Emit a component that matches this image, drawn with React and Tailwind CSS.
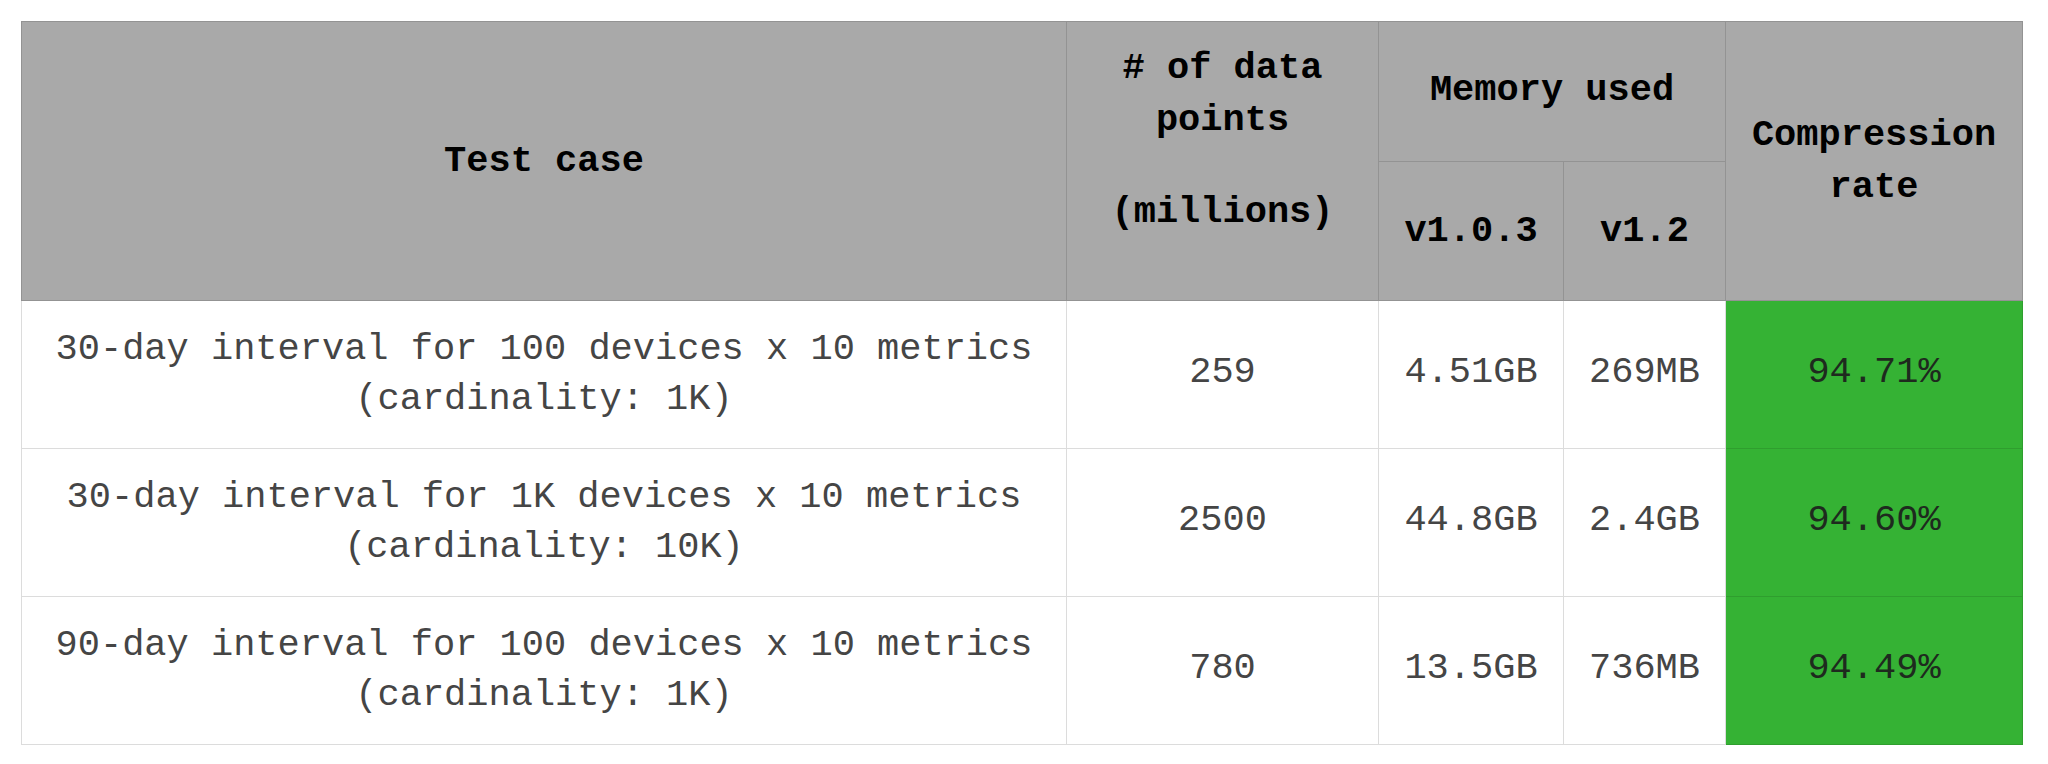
import React from 'react';

const rows = [
  {
    label: ['30-day interval for 100 devices x 10 metrics', '(cardinality: 1K)'],
    points: '259',
    v103: '4.51GB',
    v12: '269MB',
    rate: '94.71%',
  },
  {
    label: ['30-day interval for 1K devices x 10 metrics', '(cardinality: 10K)'],
    points: '2500',
    v103: '44.8GB',
    v12: '2.4GB',
    rate: '94.60%',
  },
  {
    label: ['90-day interval for 100 devices x 10 metrics', '(cardinality: 1K)'],
    points: '780',
    v103: '13.5GB',
    v12: '736MB',
    rate: '94.49%',
  },
];

export default function App() {
  return (
    <div className="w-[2048px] h-[764px] bg-white pt-[21px] pl-[21px] font-['Liberation_Mono','Courier_New',monospace]">
      <table className="table-fixed border-collapse w-[2001px] text-[37px] leading-[52px]">
        <colgroup>
          <col className="w-[1045px]" />
          <col className="w-[312px]" />
          <col className="w-[185px]" />
          <col className="w-[162px]" />
          <col className="w-[297px]" />
        </colgroup>
        <thead>
          <tr className="h-[140px]">
            <th rowSpan={2} className="bg-[#a9a9a9] border border-[#939393] font-bold text-black text-center align-middle">
              Test case
            </th>
            <th rowSpan={2} className="bg-[#a9a9a9] border border-[#939393] font-bold text-black text-center align-middle">
              <div className="flex flex-col items-center pb-[42px]">
                <span>
                  # of data
                  <br />
                  points
                </span>
                <span className="mt-[40px]">(millions)</span>
              </div>
            </th>
            <th colSpan={2} className="bg-[#a9a9a9] border border-[#939393] font-bold text-black text-center align-middle">
              <div className="pb-[4px]">Memory used</div>
            </th>
            <th rowSpan={2} className="bg-[#a9a9a9] border border-[#939393] font-bold text-black text-center align-middle">
              Compression
              <br />
              rate
            </th>
          </tr>
          <tr className="h-[139px]">
            <th className="bg-[#a9a9a9] border border-[#939393] font-bold text-black text-center align-middle">v1.0.3</th>
            <th className="bg-[#a9a9a9] border border-[#939393] font-bold text-black text-center align-middle">v1.2</th>
          </tr>
        </thead>
        <tbody>
          {rows.map((r) => (
            <tr key={r.rate} className="h-[148px] text-[#454545]">
              <td className="border border-[#dcdcdc] text-center align-middle leading-[50px] pb-[2px]">
                {r.label[0]}
                <br />
                {r.label[1]}
              </td>
              <td className="border border-[#dcdcdc] text-center align-middle pb-[6px]">{r.points}</td>
              <td className="border border-[#dcdcdc] text-center align-middle pb-[6px]">{r.v103}</td>
              <td className="border border-[#dcdcdc] text-center align-middle pb-[6px]">{r.v12}</td>
              <td className="border border-[#2f9e2e] bg-[#35b234] text-[#1e2a1e] text-center align-middle pb-[6px]">{r.rate}</td>
            </tr>
          ))}
        </tbody>
      </table>
    </div>
  );
}
